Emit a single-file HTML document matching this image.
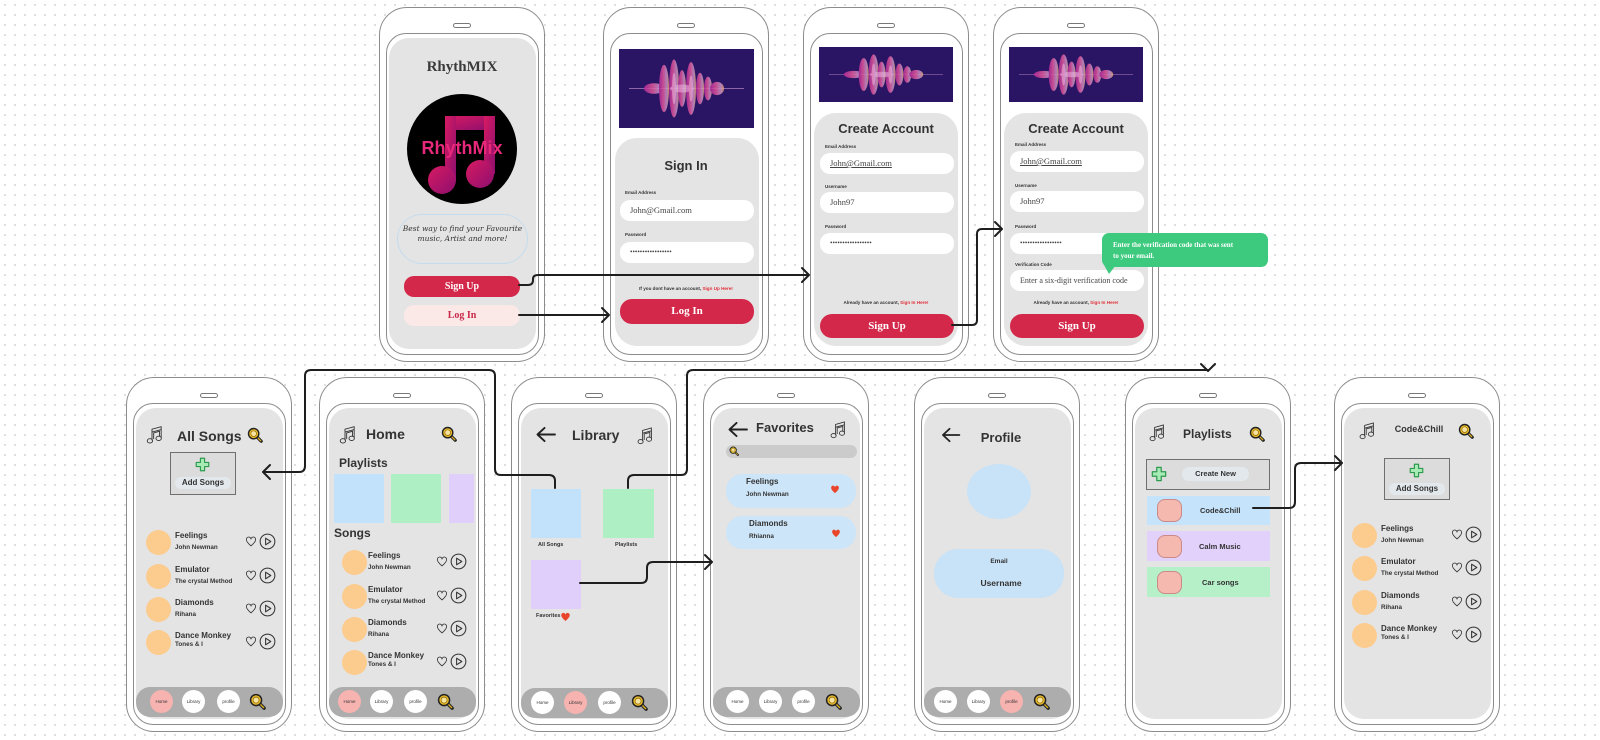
<!DOCTYPE html>
<html><head><meta charset="utf-8">
<style>
*{margin:0;padding:0;box-sizing:border-box}
html,body{width:1600px;height:740px;overflow:hidden}
body{position:relative;background-color:#fff;background-image:radial-gradient(circle,#d6d6d6 0.8px,transparent 1.1px);background-size:10px 10px;font-family:"Liberation Sans",sans-serif;color:#333}
.ph{position:absolute;width:166px;height:355px;border:1px solid #8c8c8c;border-radius:28px;background:#fff}
.spk{position:absolute;left:73px;top:15px;width:18px;height:5px;border:1px solid #777;border-radius:3px}
.fr{position:absolute;left:6px;top:25px;width:153px;height:322px;border:1px solid #8c8c8c;border-radius:20px}
.sc{position:absolute;left:9px;top:30px;width:147px;height:311px;background:#e4e4e4;border-radius:20px}
.a{position:absolute}
.t{position:absolute;white-space:nowrap;line-height:1}
.ctr{left:0;width:164px;text-align:center}
.serif{font-family:"Liberation Serif",serif}
.btn{position:absolute;border-radius:12px;text-align:center;font-family:"Liberation Serif",serif;font-weight:bold;color:#fff;background:#d3284a}
.inp{position:absolute;left:16px;width:134px;height:21px;background:#fff;border-radius:10px;font-family:"Liberation Serif",serif;font-size:8.5px;color:#444;padding-left:10px;line-height:21px}
.lbl{position:absolute;left:21px;font-size:4.5px;font-weight:bold;color:#333;line-height:1}
.panel{position:absolute;background:#e4e4e4;border-radius:22px}
.foot{position:absolute;left:0;width:164px;text-align:center;font-size:4.6px;font-weight:bold;line-height:1}
.foot b{color:#e0303a}
.nav{position:absolute;left:9px;top:309px;width:147px;height:30px;background:#adadad;border-radius:14px}
.nc{position:absolute;top:3px;width:23px;height:23px;border-radius:50%;background:#fff;font-size:4.5px;text-align:center;line-height:23px;color:#333}
.pk{background:#f6b3b0}
.row{position:absolute;left:0;width:166px;height:26px}
.row .c{position:absolute;left:19px;top:0;width:25px;height:25px;border-radius:50%;background:#fccb8e}
.row .ti{position:absolute;left:48px;top:1px;font-size:8px;font-weight:bold;white-space:nowrap;color:#333}
.row .su{position:absolute;left:48px;top:14px;font-size:6.3px;font-weight:bold;white-space:nowrap;color:#333}
.row .hr{position:absolute;left:118px;top:5px;width:12px;height:12px}
.row .pl{position:absolute;left:132px;top:3px;width:17px;height:17px}
svg.i{position:absolute;overflow:visible}
.sq{position:absolute}
.box{position:absolute;border:1.5px solid #6f6f6f;background:#dcdcdc}
.pill{position:absolute;background:#e2e8ec;border-radius:8px;font-size:8px;font-weight:bold;text-align:center;color:#333}
</style></head><body>
<svg width="0" height="0" style="position:absolute">
<defs>
<symbol id="note" viewBox="0 0 20 24"><g fill="none" stroke="#333" stroke-width="1.1"><path d="M7 18.5V5L18 2V15.5M7 8.5L18 5.5M9 17V9.5L16 7.5V14"/><ellipse cx="4.5" cy="19" rx="3.2" ry="2.6"/><ellipse cx="15" cy="16" rx="3.2" ry="2.6"/></g></symbol>
<symbol id="srch" viewBox="0 0 18 18"><line x1="11" y1="11" x2="16" y2="16" stroke="#222" stroke-width="3.6" stroke-linecap="round"/><line x1="11.5" y1="11.5" x2="15.5" y2="15.5" stroke="#e0b020" stroke-width="1.4" stroke-linecap="round"/><circle cx="7.5" cy="7.5" r="5.8" fill="#f0c030" stroke="#222" stroke-width="1.6"/><circle cx="7.5" cy="7.5" r="3.2" fill="#f7e3a0" stroke="#8a6a00" stroke-width="0.8"/></symbol>
<symbol id="plus" viewBox="0 0 18 18"><path d="M6.5 1.5H11.5V6.5H16.5V11.5H11.5V16.5H6.5V11.5H1.5V6.5H6.5Z" fill="#a6ebb5" stroke="#2e9a4e" stroke-width="1.4" stroke-linejoin="round"/></symbol>
<symbol id="heart" viewBox="0 0 16 16"><path d="M8 14.5C2 9.5 1 6.5 2.3 4.2 3.8 1.8 7 2.3 8 5 9 2.3 12.2 1.8 13.7 4.2 15 6.5 14 9.5 8 14.5Z" fill="none" stroke="#333" stroke-width="1.1"/></symbol>
<symbol id="rheart" viewBox="0 0 16 16"><path d="M8 14.5C2 9.5 1 6.5 2.3 4.2 3.8 1.8 7 2.3 8 5 9 2.3 12.2 1.8 13.7 4.2 15 6.5 14 9.5 8 14.5Z" fill="#e8452a"/></symbol>
<symbol id="play" viewBox="0 0 18 18"><circle cx="9" cy="9" r="7.8" fill="none" stroke="#333" stroke-width="1.1"/><path d="M7 5.5L12.5 9 7 12.5Z" fill="none" stroke="#333" stroke-width="1.1" stroke-linejoin="round"/></symbol>
<symbol id="back" viewBox="0 0 22 18"><path d="M21 9H3M10 2L2.5 9 10 16" fill="none" stroke="#222" stroke-width="2" stroke-linecap="round" stroke-linejoin="round"/></symbol>
<linearGradient id="wg" x1="0" x2="1"><stop offset="0" stop-color="#b52a9a"/><stop offset="0.45" stop-color="#e05a9a"/><stop offset="0.75" stop-color="#c890c8"/><stop offset="1" stop-color="#e0a070"/></linearGradient>
<symbol id="wave" viewBox="0 0 135 60" preserveAspectRatio="none"><rect width="135" height="60" fill="#2a1565"/><line x1="10" y1="30" x2="125" y2="30" stroke="#b080c0" stroke-width="0.6"/><g fill="url(#wg)" opacity="0.85"><ellipse cx="35" cy="30" rx="10" ry="4"/><ellipse cx="45" cy="30" rx="5" ry="18"/><ellipse cx="55" cy="30" rx="5" ry="22"/><ellipse cx="63" cy="30" rx="4" ry="14"/><ellipse cx="72" cy="30" rx="5" ry="20"/><ellipse cx="81" cy="30" rx="4" ry="12"/><ellipse cx="89" cy="30" rx="4" ry="9"/><ellipse cx="98" cy="30" rx="7" ry="5"/></g><g fill="#f0c0e8" opacity="0.5"><ellipse cx="55" cy="30" rx="2" ry="12"/><ellipse cx="72" cy="30" rx="2" ry="10"/><ellipse cx="63" cy="30" rx="12" ry="3"/></g></symbol>
</defs></svg>

<!-- P1 -->
<div class="ph" style="left:379px;top:7px">
<div class="spk"></div><div class="fr"></div><div class="sc"></div>
<div class="t ctr serif" style="top:52px;font-size:15px;font-weight:bold;color:#3a3a3a">RhythMIX</div>
<div class="a" style="left:27px;top:86px;width:110px;height:110px;border-radius:50%;background:#000;overflow:hidden">
<svg width="110" height="110" viewBox="0 0 110 110" style="position:absolute;left:0;top:0"><defs><linearGradient id="ng" x1="0" y1="0" x2="1" y2="1"><stop offset="0" stop-color="#d81a62"/><stop offset="1" stop-color="#8c0f6e"/></linearGradient></defs><g fill="url(#ng)"><rect x="38" y="22" width="50" height="14" rx="3"/><rect x="38" y="22" width="11" height="64"/><rect x="77" y="22" width="11" height="58"/><circle cx="35" cy="86" r="14"/><circle cx="73" cy="80" r="14"/></g></svg>
<div class="t" style="left:0;width:110px;text-align:center;top:45px;font-size:18px;font-weight:bold;color:#e8287a">RhythMix</div>
</div>
<div class="a" style="left:17px;top:206px;width:131px;height:50px;border:1.2px solid #c4dcee;border-radius:25px"></div>
<div class="a" style="left:20px;top:216px;width:125px;text-align:center;font-size:7.5px;line-height:10px;font-style:italic;font-family:'DejaVu Serif',serif;color:#333">Best way to find your Favourite music, Artist and more!</div>
<div class="btn" style="left:24px;top:268px;width:116px;height:21px;line-height:21px;font-size:10px;border-radius:10px">Sign Up</div>
<div class="btn" style="left:24px;top:297px;width:116px;height:21px;line-height:21px;font-size:10px;border-radius:10px;background:#fbe9e8;color:#c82848">Log In</div>
</div>

<!-- P2 -->
<div class="ph" style="left:603px;top:7px">
<div class="spk"></div><div class="fr"></div>
<svg class="i" style="left:15px;top:41px" width="135" height="79"><use href="#wave"/></svg>
<div class="panel" style="left:11px;top:130px;width:144px;height:208px"></div>
<div class="t ctr" style="top:151px;font-size:13px;font-weight:bold">Sign In</div>
<div class="lbl" style="top:183px">Email Address</div>
<div class="inp" style="top:192px">John@Gmail.com</div>
<div class="lbl" style="top:225px">Password</div>
<div class="inp" style="top:234px;font-size:7px">•••••••••••••••••</div>
<div class="foot" style="top:279px">If you dont have an account, <b>Sign Up Here!</b></div>
<div class="btn" style="left:16px;top:291px;width:134px;height:25px;line-height:25px;font-size:11px">Log In</div>
</div>

<!-- P3 -->
<div class="ph" style="left:803px;top:7px">
<div class="spk"></div><div class="fr"></div>
<svg class="i" style="left:15px;top:39px" width="134" height="55"><use href="#wave"/></svg>
<div class="panel" style="left:10px;top:105px;width:144px;height:233px"></div>
<div class="t ctr" style="top:114px;font-size:13px;font-weight:bold">Create Account</div>
<div class="lbl" style="top:137px">Email Address</div>
<div class="inp" style="top:145px;text-decoration:underline">John@Gmail.com</div>
<div class="lbl" style="top:177px">Username</div>
<div class="inp" style="top:184px">John97</div>
<div class="lbl" style="top:217px">Password</div>
<div class="inp" style="top:225px;font-size:7px">•••••••••••••••••</div>
<div class="foot" style="top:293px">Already have an account, <b>Sign In Here!</b></div>
<div class="btn" style="left:16px;top:306px;width:134px;height:24px;line-height:24px;font-size:11px">Sign Up</div>
</div>

<!-- P4 -->
<div class="ph" style="left:993px;top:7px">
<div class="spk"></div><div class="fr"></div>
<svg class="i" style="left:15px;top:39px" width="134" height="55"><use href="#wave"/></svg>
<div class="panel" style="left:10px;top:105px;width:144px;height:233px"></div>
<div class="t ctr" style="top:114px;font-size:13px;font-weight:bold">Create Account</div>
<div class="lbl" style="top:135px">Email Address</div>
<div class="inp" style="top:143px;text-decoration:underline">John@Gmail.com</div>
<div class="lbl" style="top:176px">Username</div>
<div class="inp" style="top:183px">John97</div>
<div class="lbl" style="top:217px">Password</div>
<div class="inp" style="top:225px;font-size:7px">•••••••••••••••••</div>
<div class="lbl" style="top:255px">Verification Code</div>
<div class="inp" style="top:262px;font-size:8px">Enter a six-digit verification code</div>
<div class="foot" style="top:293px">Already have an account, <b>Sign In Here!</b></div>
<div class="btn" style="left:16px;top:306px;width:134px;height:24px;line-height:24px;font-size:11px">Sign Up</div>
</div>
<div class="a" style="left:1102px;top:233px;width:166px;height:34px;background:#3dca7e;border-radius:7px"></div>
<div class="a" style="left:1104px;top:265px;width:0;height:0;border-left:5px solid transparent;border-right:7px solid transparent;border-top:9px solid #3dca7e"></div>
<div class="t serif" style="left:1113px;top:240px;font-size:7px;font-weight:bold;color:#fff;line-height:11px">Enter the verification code that was sent<br>to your email.</div>

<!-- B1 All Songs -->
<div class="ph" style="left:126px;top:377px">
<div class="spk"></div><div class="fr"></div><div class="sc"></div>
<svg class="i" style="left:19px;top:47px" width="17" height="20"><use href="#note"/></svg>
<div class="t" style="left:50px;top:51px;font-size:14px;font-weight:bold">All Songs</div>
<svg class="i" style="left:120px;top:49px" width="16" height="16"><use href="#srch"/></svg>
<div class="box" style="left:43px;top:74px;width:66px;height:43px"></div>
<svg class="i" style="left:68px;top:79px" width="15" height="15"><use href="#plus"/></svg>
<div class="pill" style="left:48px;top:99px;width:56px;height:12px;line-height:12px">Add Songs</div>
<div class="row" style="top:152px"><div class="c"></div><div class="ti">Feelings</div><div class="su">John Newman</div><svg class="hr"><use href="#heart"/></svg><svg class="pl"><use href="#play"/></svg></div>
<div class="row" style="top:186px"><div class="c"></div><div class="ti">Emulator</div><div class="su">The crystal Method</div><svg class="hr"><use href="#heart"/></svg><svg class="pl"><use href="#play"/></svg></div>
<div class="row" style="top:219px"><div class="c"></div><div class="ti">Diamonds</div><div class="su">Rihana</div><svg class="hr"><use href="#heart"/></svg><svg class="pl"><use href="#play"/></svg></div>
<div class="row" style="top:252px"><div class="c"></div><div class="ti">Dance Monkey</div><div class="su" style="top:11px">Tones &amp; I</div><svg class="hr"><use href="#heart"/></svg><svg class="pl"><use href="#play"/></svg></div>
<div class="nav"><div class="nc pk" style="left:14px">Home</div><div class="nc" style="left:46px">Library</div><div class="nc" style="left:81px">profile</div><svg class="i" style="left:113px;top:6px" width="17" height="17"><use href="#srch"/></svg></div>
</div>

<!-- B2 Home -->
<div class="ph" style="left:319px;top:377px">
<div class="spk"></div><div class="fr"></div><div class="sc"></div>
<svg class="i" style="left:19px;top:47px" width="17" height="20"><use href="#note"/></svg>
<div class="t" style="left:46px;top:49px;font-size:14px;font-weight:bold">Home</div>
<svg class="i" style="left:121px;top:48px" width="16" height="16"><use href="#srch"/></svg>
<div class="t" style="left:19px;top:79px;font-size:12px;font-weight:bold">Playlists</div>
<div class="sq" style="left:14px;top:96px;width:50px;height:49px;background:#c2e2fb"></div>
<div class="sq" style="left:71px;top:96px;width:50px;height:49px;background:#aef0c4"></div>
<div class="sq" style="left:129px;top:96px;width:25px;height:49px;background:#e1cffb"></div>
<div class="t" style="left:14px;top:149px;font-size:12px;font-weight:bold">Songs</div>
<div class="row" style="top:172px;left:3px"><div class="c"></div><div class="ti" style="left:45px">Feelings</div><div class="su" style="left:45px">John Newman</div><svg class="hr" style="left:113px"><use href="#heart"/></svg><svg class="pl" style="left:127px"><use href="#play"/></svg></div>
<div class="row" style="top:206px;left:3px"><div class="c"></div><div class="ti" style="left:45px">Emulator</div><div class="su" style="left:45px">The crystal Method</div><svg class="hr" style="left:113px"><use href="#heart"/></svg><svg class="pl" style="left:127px"><use href="#play"/></svg></div>
<div class="row" style="top:239px;left:3px"><div class="c"></div><div class="ti" style="left:45px">Diamonds</div><div class="su" style="left:45px">Rihana</div><svg class="hr" style="left:113px"><use href="#heart"/></svg><svg class="pl" style="left:127px"><use href="#play"/></svg></div>
<div class="row" style="top:272px;left:3px"><div class="c"></div><div class="ti" style="left:45px">Dance Monkey</div><div class="su" style="left:45px;top:11px">Tones &amp; I</div><svg class="hr" style="left:113px"><use href="#heart"/></svg><svg class="pl" style="left:127px"><use href="#play"/></svg></div>
<div class="nav"><div class="nc pk" style="left:9px">Home</div><div class="nc" style="left:41px">Library</div><div class="nc" style="left:75px">profile</div><svg class="i" style="left:108px;top:6px" width="17" height="17"><use href="#srch"/></svg></div>
</div>

<!-- B3 Library -->
<div class="ph" style="left:511px;top:377px">
<div class="spk"></div><div class="fr"></div><div class="sc"></div>
<svg class="i" style="left:23px;top:48px" width="21" height="17"><use href="#back"/></svg>
<div class="t" style="left:60px;top:50px;font-size:14px;font-weight:bold">Library</div>
<svg class="i" style="left:125px;top:48px" width="16" height="20"><use href="#note"/></svg>
<div class="sq" style="left:19px;top:111px;width:50px;height:49px;background:#c2e2fb"></div>
<div class="t" style="left:26px;top:165px;font-size:5.5px;font-weight:bold">All Songs</div>
<div class="sq" style="left:91px;top:111px;width:51px;height:49px;background:#aef0c4"></div>
<div class="t" style="left:103px;top:165px;font-size:5.5px;font-weight:bold">Playlists</div>
<div class="sq" style="left:19px;top:182px;width:50px;height:49px;background:#e1cffb"></div>
<div class="t" style="left:24px;top:236px;font-size:5.5px;font-weight:bold">Favorites</div>
<svg class="i" style="left:48px;top:233px" width="11" height="11"><use href="#rheart"/></svg>
<div class="nav" style="top:310px"><div class="nc" style="left:10px">Home</div><div class="nc pk" style="left:43px">Library</div><div class="nc" style="left:77px">profile</div><svg class="i" style="left:110px;top:6px" width="17" height="17"><use href="#srch"/></svg></div>
</div>

<!-- B4 Favorites -->
<div class="ph" style="left:703px;top:377px">
<div class="spk"></div><div class="fr"></div><div class="sc"></div>
<svg class="i" style="left:23px;top:43px" width="21" height="17"><use href="#back"/></svg>
<div class="t" style="left:52px;top:43px;font-size:13px;font-weight:bold">Favorites</div>
<svg class="i" style="left:126px;top:42px" width="16" height="20"><use href="#note"/></svg>
<div class="a" style="left:22px;top:67px;width:131px;height:13px;background:#cbcbcb;border-radius:7px"></div>
<svg class="i" style="left:25px;top:68px" width="10" height="10"><use href="#srch"/></svg>
<div class="a" style="left:22px;top:96px;width:130px;height:34px;background:#cde5f8;border-radius:16px"></div>
<div class="t" style="left:42px;top:100px;font-size:8px;font-weight:bold">Feelings</div>
<div class="t" style="left:42px;top:114px;font-size:6.3px;font-weight:bold">John Newman</div>
<svg class="i" style="left:126px;top:106px" width="10" height="10"><use href="#rheart"/></svg>
<div class="a" style="left:22px;top:138px;width:130px;height:33px;background:#cde5f8;border-radius:16px"></div>
<div class="t" style="left:45px;top:142px;font-size:8px;font-weight:bold">Diamonds</div>
<div class="t" style="left:45px;top:156px;font-size:6.3px;font-weight:bold">Rhianna</div>
<svg class="i" style="left:127px;top:150px" width="10" height="10"><use href="#rheart"/></svg>
<div class="nav"><div class="nc" style="left:13px">Home</div><div class="nc" style="left:46px">Library</div><div class="nc" style="left:79px">profile</div><svg class="i" style="left:112px;top:6px" width="17" height="17"><use href="#srch"/></svg></div>
</div>

<!-- B5 Profile -->
<div class="ph" style="left:914px;top:377px">
<div class="spk"></div><div class="fr"></div><div class="sc"></div>
<svg class="i" style="left:25px;top:49px" width="21" height="16"><use href="#back"/></svg>
<div class="t ctr" style="top:53px;font-size:13px;font-weight:bold;left:4px">Profile</div>
<div class="a" style="left:52px;top:86px;width:64px;height:55px;border-radius:50%;background:#c8e2f7"></div>
<div class="a" style="left:19px;top:171px;width:130px;height:49px;border-radius:24px;background:#c8e2f7"></div>
<div class="t ctr" style="top:181px;font-size:6.5px;font-weight:bold;left:2px">Email</div>
<div class="t ctr" style="top:201px;font-size:8.5px;font-weight:bold;left:4px">Username</div>
<div class="nav"><div class="nc" style="left:10px">Home</div><div class="nc" style="left:43px">Library</div><div class="nc pk" style="left:76px">profile</div><svg class="i" style="left:109px;top:6px" width="17" height="17"><use href="#srch"/></svg></div>
</div>

<!-- B6 Playlists -->
<div class="ph" style="left:1125px;top:377px">
<div class="spk"></div><div class="fr"></div><div class="sc"></div>
<svg class="i" style="left:23px;top:45px" width="16" height="20"><use href="#note"/></svg>
<div class="t" style="left:57px;top:50px;font-size:12px;font-weight:bold">Playlists</div>
<svg class="i" style="left:123px;top:48px" width="16" height="16"><use href="#srch"/></svg>
<div class="box" style="left:20px;top:81px;width:124px;height:31px"></div>
<svg class="i" style="left:25px;top:88px" width="16" height="16"><use href="#plus"/></svg>
<div class="pill" style="left:56px;top:89px;width:67px;height:14px;line-height:14px;font-size:7.5px">Create New</div>
<div class="sq" style="left:21px;top:118px;width:123px;height:29px;background:#c5e3fb"></div>
<div class="a" style="left:31px;top:121px;width:25px;height:23px;border-radius:8px;background:#f6b9b0;border:1px solid #c98a88"></div>
<div class="t" style="left:74px;top:129px;font-size:7.5px;font-weight:bold">Code&amp;Chill</div>
<div class="sq" style="left:21px;top:153px;width:123px;height:30px;background:#e2d1fb"></div>
<div class="a" style="left:31px;top:157px;width:25px;height:23px;border-radius:8px;background:#f6b9b0;border:1px solid #c98a88"></div>
<div class="t" style="left:73px;top:165px;font-size:7.5px;font-weight:bold">Calm Music</div>
<div class="sq" style="left:21px;top:189px;width:123px;height:30px;background:#b5f0c8"></div>
<div class="a" style="left:31px;top:193px;width:25px;height:23px;border-radius:8px;background:#f6b9b0;border:1px solid #c98a88"></div>
<div class="t" style="left:76px;top:201px;font-size:7.5px;font-weight:bold">Car songs</div>
</div>

<!-- B7 Code&Chill -->
<div class="ph" style="left:1334px;top:377px">
<div class="spk"></div><div class="fr"></div><div class="sc"></div>
<svg class="i" style="left:24px;top:43px" width="16" height="20"><use href="#note"/></svg>
<div class="t ctr" style="top:47px;font-size:9px;font-weight:bold;left:2px">Code&amp;Chill</div>
<svg class="i" style="left:123px;top:45px" width="16" height="16"><use href="#srch"/></svg>
<div class="box" style="left:49px;top:80px;width:66px;height:42px"></div>
<svg class="i" style="left:74px;top:85px" width="15" height="15"><use href="#plus"/></svg>
<div class="pill" style="left:54px;top:105px;width:56px;height:12px;line-height:12px">Add Songs</div>
<div class="row" style="top:145px;left:-2px"><div class="c"></div><div class="ti">Feelings</div><div class="su">John Newman</div><svg class="hr"><use href="#heart"/></svg><svg class="pl"><use href="#play"/></svg></div>
<div class="row" style="top:178px;left:-2px"><div class="c"></div><div class="ti">Emulator</div><div class="su">The crystal Method</div><svg class="hr"><use href="#heart"/></svg><svg class="pl"><use href="#play"/></svg></div>
<div class="row" style="top:212px;left:-2px"><div class="c"></div><div class="ti">Diamonds</div><div class="su">Rihana</div><svg class="hr"><use href="#heart"/></svg><svg class="pl"><use href="#play"/></svg></div>
<div class="row" style="top:245px;left:-2px"><div class="c"></div><div class="ti">Dance Monkey</div><div class="su" style="top:11px">Tones &amp; I</div><svg class="hr"><use href="#heart"/></svg><svg class="pl"><use href="#play"/></svg></div>
</div>

<!-- connectors -->
<svg class="a" style="left:0;top:0" width="1600" height="740" viewBox="0 0 1600 740">
<g fill="none" stroke="#1e1e1e" stroke-width="2" stroke-linecap="round" stroke-linejoin="round">
<path d="M519 285H528Q533 285 533 280V279Q533 275 538 275H809M802 268L809 275 802 282"/>
<path d="M519 315H609M602 308L609 315 602 322"/>
<path d="M952 325H972Q977 325 977 320V234Q977 229 982 229H1002M995 222L1002 229 995 236"/>
<path d="M555 488V481Q555 475 549 475H501Q495 475 495 469V376Q495 370 489 370H311Q305 370 305 376V466Q305 472 299 472H263M270 465L263 472 270 479"/>
<path d="M628 488V481Q628 475 634 475H681Q687 475 687 469V376Q687 370 693 370H1208M1201 364L1208 371 1215 364"/>
<path d="M580 583H641Q647 583 647 577V568Q647 562 653 562H712M705 555L712 562 705 569"/>
<path d="M1253 508H1289Q1295 508 1295 502V469Q1295 463 1301 463H1342M1335 456L1342 463 1335 470"/>
</g>
</svg>
</body></html>
